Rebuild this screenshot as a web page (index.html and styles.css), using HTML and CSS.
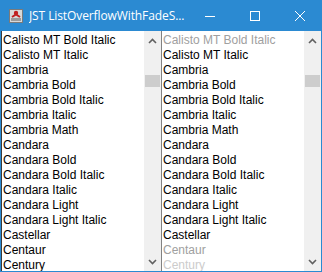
FILE: index.html
```html
<!DOCTYPE html>
<html>
<head>
<meta charset="utf-8">
<link rel="stylesheet" href="styles.css">
</head>
<body>
<div class="window">
  <div class="titlebar">
    <svg class="appicon" width="16" height="16" viewBox="0 0 16 16">
      <rect x="1.5" y="1.5" width="13" height="13" fill="#d8d8d8" stroke="#7a7a7a"/>
      <rect x="3" y="10" width="10" height="3" fill="#9a9a9a"/>
      <circle cx="8" cy="5" r="2.2" fill="#c02020"/>
      <path d="M4 9 L8 6.5 L12 9" stroke="#c02020" stroke-width="2" fill="none"/>
    </svg>
    <span class="title">JST ListOverflowWithFadeS...</span>
    <div class="controls">
      <span class="ctl"><svg width="10" height="10" viewBox="0 0 10 10"><path d="M0 5.5H10" stroke="#fff" stroke-width="1"/></svg></span>
      <span class="ctl"><svg width="10" height="10" viewBox="0 0 10 10"><rect x="0.5" y="0.5" width="9" height="9" stroke="#fff" stroke-width="1" fill="none"/></svg></span>
      <span class="ctl"><svg width="10" height="10" viewBox="0 0 10 10"><path d="M0 0L10 10M10 0L0 10" stroke="#fff" stroke-width="1"/></svg></span>
    </div>
  </div>
  <div class="content">
    <div class="list">
      <ul class="items">
        <li>Calisto MT Bold Italic</li>
        <li>Calisto MT Italic</li>
        <li>Cambria</li>
        <li>Cambria Bold</li>
        <li>Cambria Bold Italic</li>
        <li>Cambria Italic</li>
        <li>Cambria Math</li>
        <li>Candara</li>
        <li>Candara Bold</li>
        <li>Candara Bold Italic</li>
        <li>Candara Italic</li>
        <li>Candara Light</li>
        <li>Candara Light Italic</li>
        <li>Castellar</li>
        <li>Centaur</li>
        <li>Century</li>
      </ul>
      <div class="scrollbar">
        <svg class="arrow" width="9" height="6" viewBox="0 0 9 6"><path d="M1 5L4.5 1.5L8 5" stroke="#606060" stroke-width="1.6" fill="none"/></svg>
        <div class="track"><div class="thumb"></div></div>
        <svg class="arrow" width="9" height="6" viewBox="0 0 9 6"><path d="M1 1L4.5 4.5L8 1" stroke="#606060" stroke-width="1.6" fill="none"/></svg>
      </div>
    </div>
    <div class="list right">
      <ul class="items">
        <li class="fade1">Calisto MT Bold Italic</li>
        <li>Calisto MT Italic</li>
        <li>Cambria</li>
        <li>Cambria Bold</li>
        <li>Cambria Bold Italic</li>
        <li>Cambria Italic</li>
        <li>Cambria Math</li>
        <li>Candara</li>
        <li>Candara Bold</li>
        <li>Candara Bold Italic</li>
        <li>Candara Italic</li>
        <li>Candara Light</li>
        <li>Candara Light Italic</li>
        <li>Castellar</li>
        <li class="fade1">Centaur</li>
        <li class="fade2">Century</li>
      </ul>
      <div class="scrollbar">
        <svg class="arrow" width="9" height="6" viewBox="0 0 9 6"><path d="M1 5L4.5 1.5L8 5" stroke="#606060" stroke-width="1.6" fill="none"/></svg>
        <div class="track"><div class="thumb"></div></div>
        <svg class="arrow" width="9" height="6" viewBox="0 0 9 6"><path d="M1 1L4.5 4.5L8 1" stroke="#606060" stroke-width="1.6" fill="none"/></svg>
      </div>
    </div>
  </div>
</div>
</body>
</html>
```
FILE: styles.css
```css
html, body { margin: 0; padding: 0; }
body { width: 322px; height: 272px; overflow: hidden; background: #2b8ad2; }
.window { width: 322px; height: 272px; display: flex; flex-direction: column; }
.titlebar {
  height: 31px; flex: none; display: flex; align-items: center;
  color: #fff; font-family: "Open Sans", "Noto Sans", sans-serif; font-size: 12px;
}
.appicon { margin-left: 8px; margin-right: 5px; }
.title { flex: 1; white-space: nowrap; overflow: hidden; letter-spacing: -0.1px; }
.controls { display: flex; height: 31px; }
.ctl { width: 45px; height: 31px; display: flex; align-items: center; justify-content: center; }
.content {
  flex: 1; display: flex; margin: 0 1px 1px 1px; background: #fff; min-height: 0;
}
.list { width: 159px; display: flex; background: #fff; border-left: 1px solid #3a3a3a; }
.list.right { border-left: 1px solid #828282; width: 159px; }
.items {
  list-style: none; margin: 0; padding: 2px 0 0 1px; flex: 1; overflow: hidden;
  font-family: "Liberation Sans", sans-serif; font-size: 12px; color: #000;
}
.items li { height: 15px; line-height: 15px; white-space: nowrap; }
.items li.fade1 { color: #a0a0a0; }
.items li.fade2 { color: #cccccc; }
.scrollbar {
  width: 17px; flex: none; background: #f0f0f0; display: flex; flex-direction: column; align-items: center;
}
.arrow { margin: 7px 0 4px; flex: none; }
.arrow:last-child { margin: 4px 0 6px; }
.track { flex: 1; width: 100%; position: relative; }
.thumb { margin: 27px 1px 0; height: 12px; background: #cdcdcd; }
```
